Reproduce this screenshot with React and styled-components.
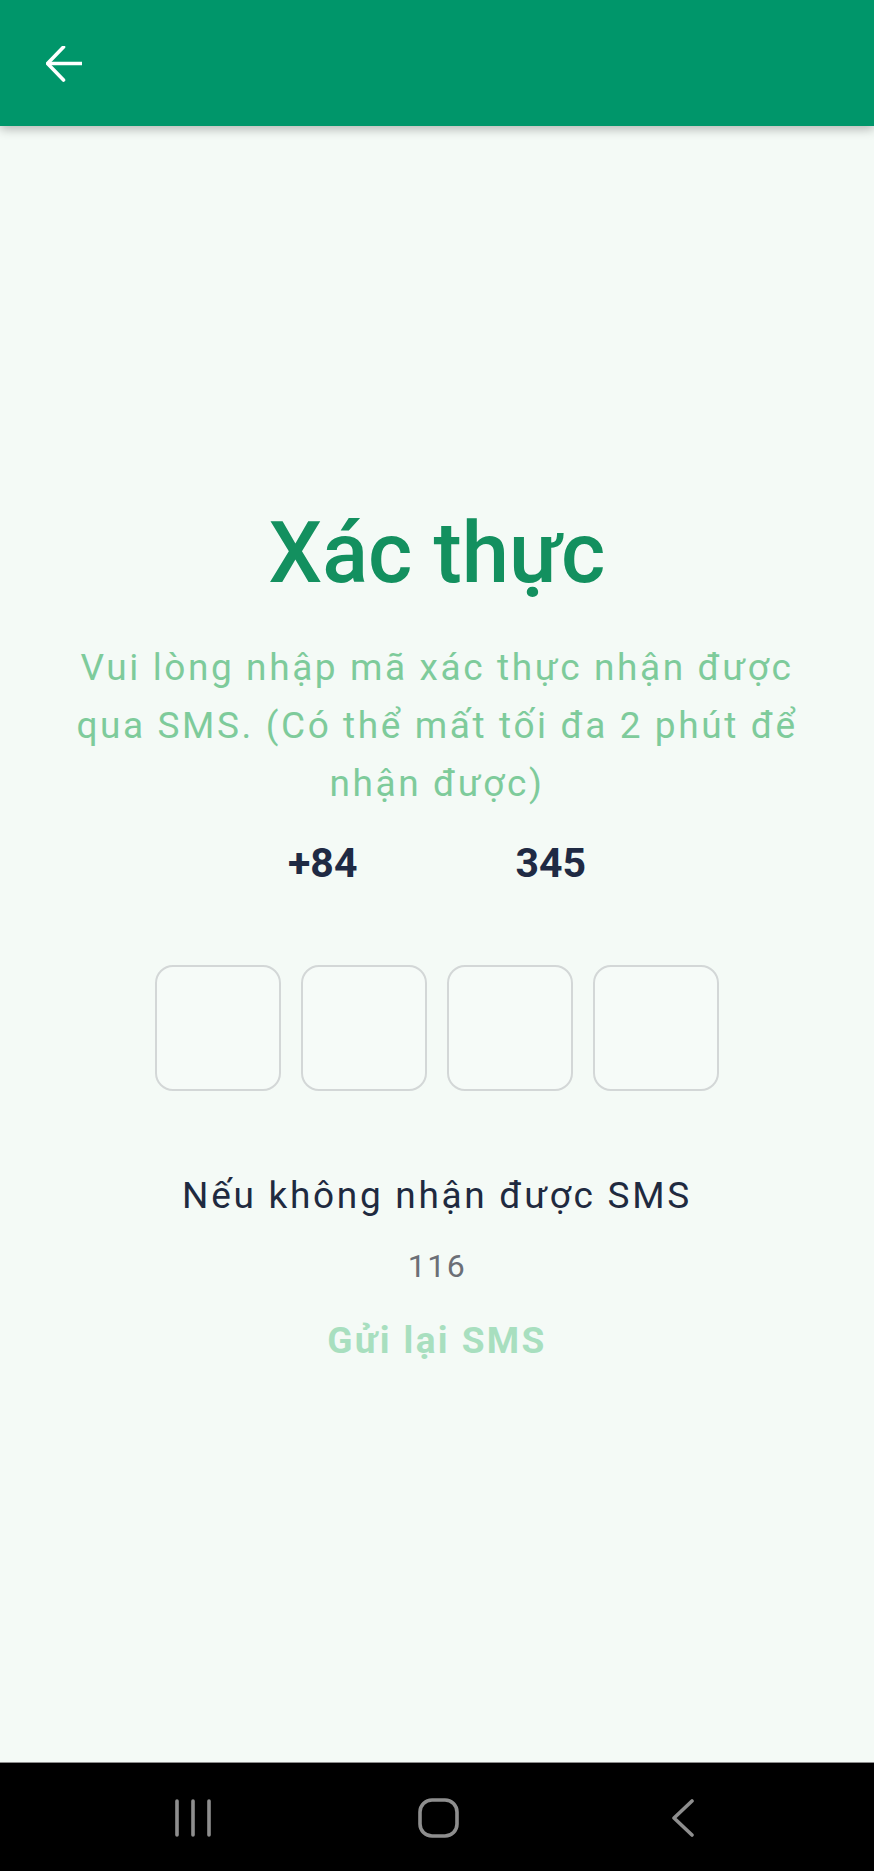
import React from "react";
import styled, { createGlobalStyle } from "styled-components";

const Global = createGlobalStyle`
  html, body { margin: 0; padding: 0; }
  body { background: #f4faf6; font-family: Roboto, "Noto Sans", Arial, sans-serif; }
  * { box-sizing: border-box; }
`;

const Page = styled.div`
  width: 874px;
  height: 1871px;
  display: flex;
  flex-direction: column;
  background: #f4faf6;
  overflow: hidden;
`;

const Header = styled.header`
  height: 126px;
  flex: none;
  background: #00966a;
  display: flex;
  align-items: center;
  padding-left: 46px;
  box-shadow: 0 3px 10px rgba(0, 0, 0, 0.28);
  position: relative;
  z-index: 2;
`;

const BackButton = styled.button`
  border: 0;
  background: transparent;
  padding: 0;
  width: 36px;
  height: 36px;
  display: flex;
  margin-top: 1px;
`;

const Main = styled.main`
  flex: 1;
  display: flex;
  flex-direction: column;
  align-items: center;
  padding-top: 385px;
`;

const Title = styled.h1`
  margin: 0;
  font-family: Roboto, sans-serif;
  font-weight: 500;
  font-size: 85px;
  line-height: 1;
  color: #13905f;
  letter-spacing: 0;
`;

const Subtitle = styled.p`
  margin: 43px 0 0;
  font-family: Roboto, sans-serif;
  font-weight: 400;
  font-size: 37px;
  line-height: 58px;
  letter-spacing: 2.6px;
  color: #7ecb9b;
  text-align: center;
  white-space: nowrap;
`;

const PhoneRow = styled.div`
  margin-top: 30px;
  display: flex;
  gap: 158px;
  font-family: Roboto, sans-serif;
  font-weight: 700;
  font-size: 41px;
  line-height: 1;
  color: #1f2a44;
`;

const CodeRow = styled.div`
  margin-top: 81px;
  display: flex;
  gap: 20px;
`;

const CodeBox = styled.div`
  width: 126px;
  height: 126px;
  border: 2px solid #d3d7d7;
  border-radius: 18px;
  background: #f6fbf8;
`;

const Hint = styled.p`
  margin: 86px 0 0;
  font-family: Roboto, sans-serif;
  font-size: 37px;
  line-height: 1;
  letter-spacing: 2.7px;
  color: #1f2a40;
`;

const Countdown = styled.div`
  margin-top: 36px;
  font-family: Roboto, sans-serif;
  font-size: 32px;
  line-height: 1;
  letter-spacing: 1.5px;
  color: #6b6f76;
`;

const Resend = styled.button`
  margin-top: 40px;
  border: 0;
  background: transparent;
  padding: 0;
  font-family: Roboto, sans-serif;
  font-weight: 700;
  font-size: 37px;
  line-height: 1;
  letter-spacing: 2.4px;
  color: #a8dfbf;
`;

const NavBar = styled.nav`
  height: 109px;
  flex: none;
  background: #000;
  border-top: 1px solid #8c8c8c;
  display: flex;
  align-items: center;
  justify-content: center;
  gap: 185px;
  padding-left: 2px;
`;

const NavIcon = styled.div`
  width: 60px;
  height: 40px;
  display: flex;
  align-items: center;
  justify-content: center;
  margin-top: 2px;
`;

const ArrowBack = () => (
  <svg width="36" height="36" viewBox="0 0 36 36" fill="none">
    <path d="M2 17.5 H36" stroke="#fff" strokeWidth="3.6" strokeLinecap="butt" />
    <path d="M17.5 1 L1.5 17.5 L17.5 34" stroke="#fff" strokeWidth="3.6" strokeLinecap="round" strokeLinejoin="miter" />
  </svg>
);

const RecentsIcon = () => (
  <svg width="38" height="38" viewBox="0 0 38 38" fill="none">
    <path d="M3 2 V36 M19 2 V36 M35 2 V36" stroke="#8e8e8e" strokeWidth="3.6" strokeLinecap="round" />
  </svg>
);

const HomeIcon = () => (
  <svg width="41" height="40" viewBox="0 0 41 40" fill="none">
    <rect x="2" y="2" width="37" height="36" rx="12" stroke="#8e8e8e" strokeWidth="3.6" />
  </svg>
);

const BackNavIcon = () => (
  <svg width="24" height="38" viewBox="0 0 24 38" fill="none">
    <path d="M21 2 L3 19 L21 36" stroke="#8e8e8e" strokeWidth="3.6" strokeLinecap="round" strokeLinejoin="round" />
  </svg>
);

export default function App() {
  return (
    <>
      <Global />
      <Page>
        <Header>
          <BackButton aria-label="Quay lại">
            <ArrowBack />
          </BackButton>
        </Header>
        <Main>
          <Title>Xác thực</Title>
          <Subtitle>
            Vui lòng nhập mã xác thực nhận được
            <br />
            qua SMS. (Có thể mất tối đa 2 phút để
            <br />
            nhận được)
          </Subtitle>
          <PhoneRow>
            <span>+84</span>
            <span>345</span>
          </PhoneRow>
          <CodeRow>
            {[0, 1, 2, 3].map((i) => (
              <CodeBox key={i} />
            ))}
          </CodeRow>
          <Hint>Nếu không nhận được SMS</Hint>
          <Countdown>116</Countdown>
          <Resend>Gửi lại SMS</Resend>
        </Main>
        <NavBar>
          <NavIcon>
            <RecentsIcon />
          </NavIcon>
          <NavIcon>
            <HomeIcon />
          </NavIcon>
          <NavIcon>
            <BackNavIcon />
          </NavIcon>
        </NavBar>
      </Page>
    </>
  );
}
